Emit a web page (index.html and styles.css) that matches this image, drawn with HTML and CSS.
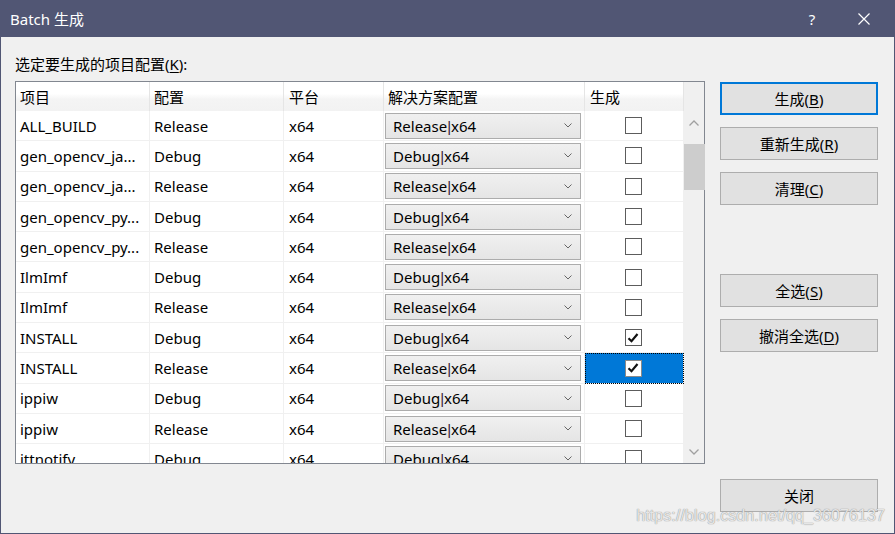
FILE: index.html
```html
<!DOCTYPE html>
<html lang="zh-CN">
<head>
<meta charset="utf-8">
<title>Batch 生成</title>
<link rel="stylesheet" href="styles.css">
</head>
<body>
<div class="window">
  <div class="titlebar">
    <span class="title">Batch 生成</span>
    <span class="tb-help">?</span>
    <span class="tb-close"><svg width="12" height="12" viewBox="0 0 12 12"><path d="M0.5 0.5L11.5 11.5M11.5 0.5L0.5 11.5" stroke="#fff" stroke-width="1.2" fill="none"/></svg></span>
  </div>
  <div class="content">
    <div class="left">
      <div class="label">选定要生成的项目配置(<u>K</u>):</div>
      <div class="table">
        <div class="cells">
          <div class="grid">
            <div class="hcell">项目</div><div class="hcell">配置</div><div class="hcell">平台</div><div class="hcell">解决方案配置</div><div class="hcell">生成</div>

            <div class="cell">ALL_BUILD</div><div class="cell">Release</div><div class="cell">x64</div><div class="cell dd-cell"><div class="dd"><span>Release<i class="pipe">|</i>x64</span><svg class="chev" width="8" height="5" viewBox="0 0 8 5"><path d="M0.5 0.5L4 4L7.5 0.5" stroke="#666" fill="none"/></svg></div></div><div class="cell cb-cell"><span class="cb"></span></div>

            <div class="cell">gen_opencv_ja...</div><div class="cell">Debug</div><div class="cell">x64</div><div class="cell dd-cell"><div class="dd"><span>Debug<i class="pipe">|</i>x64</span><svg class="chev" width="8" height="5" viewBox="0 0 8 5"><path d="M0.5 0.5L4 4L7.5 0.5" stroke="#666" fill="none"/></svg></div></div><div class="cell cb-cell"><span class="cb"></span></div>

            <div class="cell">gen_opencv_ja...</div><div class="cell">Release</div><div class="cell">x64</div><div class="cell dd-cell"><div class="dd"><span>Release<i class="pipe">|</i>x64</span><svg class="chev" width="8" height="5" viewBox="0 0 8 5"><path d="M0.5 0.5L4 4L7.5 0.5" stroke="#666" fill="none"/></svg></div></div><div class="cell cb-cell"><span class="cb"></span></div>

            <div class="cell">gen_opencv_py...</div><div class="cell">Debug</div><div class="cell">x64</div><div class="cell dd-cell"><div class="dd"><span>Debug<i class="pipe">|</i>x64</span><svg class="chev" width="8" height="5" viewBox="0 0 8 5"><path d="M0.5 0.5L4 4L7.5 0.5" stroke="#666" fill="none"/></svg></div></div><div class="cell cb-cell"><span class="cb"></span></div>

            <div class="cell">gen_opencv_py...</div><div class="cell">Release</div><div class="cell">x64</div><div class="cell dd-cell"><div class="dd"><span>Release<i class="pipe">|</i>x64</span><svg class="chev" width="8" height="5" viewBox="0 0 8 5"><path d="M0.5 0.5L4 4L7.5 0.5" stroke="#666" fill="none"/></svg></div></div><div class="cell cb-cell"><span class="cb"></span></div>

            <div class="cell">IlmImf</div><div class="cell">Debug</div><div class="cell">x64</div><div class="cell dd-cell"><div class="dd"><span>Debug<i class="pipe">|</i>x64</span><svg class="chev" width="8" height="5" viewBox="0 0 8 5"><path d="M0.5 0.5L4 4L7.5 0.5" stroke="#666" fill="none"/></svg></div></div><div class="cell cb-cell"><span class="cb"></span></div>

            <div class="cell">IlmImf</div><div class="cell">Release</div><div class="cell">x64</div><div class="cell dd-cell"><div class="dd"><span>Release<i class="pipe">|</i>x64</span><svg class="chev" width="8" height="5" viewBox="0 0 8 5"><path d="M0.5 0.5L4 4L7.5 0.5" stroke="#666" fill="none"/></svg></div></div><div class="cell cb-cell"><span class="cb"></span></div>

            <div class="cell">INSTALL</div><div class="cell">Debug</div><div class="cell">x64</div><div class="cell dd-cell"><div class="dd"><span>Debug<i class="pipe">|</i>x64</span><svg class="chev" width="8" height="5" viewBox="0 0 8 5"><path d="M0.5 0.5L4 4L7.5 0.5" stroke="#666" fill="none"/></svg></div></div><div class="cell cb-cell"><span class="cb"><svg width="14" height="14" viewBox="0 0 14 14"><path d="M2.5 7.2L5.5 10.2L11.5 3" stroke="#111" stroke-width="2.2" fill="none"/></svg></span></div>

            <div class="cell">INSTALL</div><div class="cell">Release</div><div class="cell">x64</div><div class="cell dd-cell"><div class="dd"><span>Release<i class="pipe">|</i>x64</span><svg class="chev" width="8" height="5" viewBox="0 0 8 5"><path d="M0.5 0.5L4 4L7.5 0.5" stroke="#666" fill="none"/></svg></div></div><div class="cell cb-cell selected"><span class="cb cb-sel"><svg width="14" height="14" viewBox="0 0 14 14"><path d="M2.5 7.2L5.5 10.2L11.5 3" stroke="#111" stroke-width="2.2" fill="none"/></svg></span></div>

            <div class="cell">ippiw</div><div class="cell">Debug</div><div class="cell">x64</div><div class="cell dd-cell"><div class="dd"><span>Debug<i class="pipe">|</i>x64</span><svg class="chev" width="8" height="5" viewBox="0 0 8 5"><path d="M0.5 0.5L4 4L7.5 0.5" stroke="#666" fill="none"/></svg></div></div><div class="cell cb-cell"><span class="cb"></span></div>

            <div class="cell">ippiw</div><div class="cell">Release</div><div class="cell">x64</div><div class="cell dd-cell"><div class="dd"><span>Release<i class="pipe">|</i>x64</span><svg class="chev" width="8" height="5" viewBox="0 0 8 5"><path d="M0.5 0.5L4 4L7.5 0.5" stroke="#666" fill="none"/></svg></div></div><div class="cell cb-cell"><span class="cb"></span></div>

            <div class="cell">ittnotify</div><div class="cell">Debug</div><div class="cell">x64</div><div class="cell dd-cell"><div class="dd"><span>Debug<i class="pipe">|</i>x64</span><svg class="chev" width="8" height="5" viewBox="0 0 8 5"><path d="M0.5 0.5L4 4L7.5 0.5" stroke="#666" fill="none"/></svg></div></div><div class="cell cb-cell"><span class="cb"></span></div>
          </div>
        </div>
        <div class="scrollbar">
          <div class="sb-btn"><svg width="10" height="6" viewBox="0 0 10 6"><path d="M0.5 5.5L5 1L9.5 5.5" stroke="#a0a0a0" stroke-width="1.3" fill="none"/></svg></div>
          <div class="sb-thumb"></div>
          <div class="sb-track"></div>
          <div class="sb-btn"><svg width="10" height="6" viewBox="0 0 10 6"><path d="M0.5 0.5L5 5L9.5 0.5" stroke="#a0a0a0" stroke-width="1.3" fill="none"/></svg></div>
        </div>
      </div>
    </div>
    <div class="right">
      <button class="btn btn-default">生成(<u>B</u>)</button>
      <button class="btn">重新生成(<u>R</u>)</button>
      <button class="btn">清理(<u>C</u>)</button>
      <button class="btn btn-group2">全选(<u>S</u>)</button>
      <button class="btn">撤消全选(<u>D</u>)</button>
      <button class="btn btn-close">关闭</button>
    </div>
  </div>
  <div class="watermark">https://blog.csdn.net/qq_36076137</div>
</div>
</body>
</html>
```

FILE: styles.css
```css
* { box-sizing: border-box; }
html, body { margin: 0; padding: 0; }
body {
  width: 895px;
  height: 534px;
  overflow: hidden;
  font-family: "Noto Sans", "Noto Sans CJK SC", sans-serif;
  font-size: 15px;
  color: #000;
  background: #f0f0f0;
}
.window {
  position: relative;
  width: 895px;
  height: 534px;
  border: 1px solid #515674;
  border-top: 0;
  background: #f0f0f0;
  display: flex;
  flex-direction: column;
}
.titlebar {
  height: 37px;
  background: #515674;
  color: #fff;
  display: flex;
  align-items: center;
  padding-left: 9px;
  flex: none;
}
.title {
  font-size: 15px;
  line-height: 20px;
  flex: 1;
}
.tb-help {
  width: 20px;
  font-size: 15px;
  text-align: center;
  margin-right: 36px;
  font-family: "Noto Sans", sans-serif;
}
.tb-close {
  width: 12px;
  height: 12px;
  display: flex;
  margin-right: 24px;
}
.content {
  flex: 1;
  display: flex;
  padding-left: 14px;
}
.left {
  display: flex;
  flex-direction: column;
}
.label {
  margin-top: 17px;
  height: 20px;
  line-height: 20px;
  font-size: 15px;
}
.label u, .btn u { text-decoration-thickness: 1px; text-underline-offset: 2px; }
.table {
  margin-top: 7px;
  width: 690px;
  height: 383px;
  border: 1px solid #828790;
  display: flex;
  background: #fff;
}
.cells {
  width: 668px;
  height: 381px;
  overflow: hidden;
}
.grid {
  display: grid;
  grid-template-columns: 134px 134px 100px 201px 99px;
  grid-template-rows: 29px;
  grid-auto-rows: 30.3px;
}
.hcell {
  background: linear-gradient(#ffffff, #ffffff 40%, #f4f4f4 60%, #f2f2f2);
  border-right: 1px solid #e5e5e5;
  display: flex;
  align-items: center;
  padding-left: 4px;
  line-height: 20px;
}
.hcell:nth-child(3) { padding-left: 5px; }
.hcell:nth-child(5) { padding-left: 5px; }
.cell {
  border-right: 1px solid #f0f0f0;
  border-bottom: 1px solid #f0f0f0;
  display: flex;
  align-items: center;
  padding-left: 4px;
  white-space: nowrap;
  overflow: hidden;
  line-height: 20px;
}
.grid > .cell:nth-child(5n+3) { padding-left: 5px; }
.dd-cell { padding-left: 1px; }
.dd {
  width: 196px;
  height: 26px;
  border: 1px solid #acacac;
  background: linear-gradient(#f0f0f0, #e5e5e5);
  display: flex;
  align-items: center;
  padding-left: 7px;
  padding-right: 8px;
}
.dd span {
  flex: 1;
  display: block;
  height: 20px;
  line-height: 20px;
}
.pipe {
  font-style: normal;
  font-family: "Liberation Sans", sans-serif;
  line-height: 1;
  color: #3a1a3a;
}
.chev { display: block; }
.cb-cell {
  justify-content: center;
  padding-left: 0;
  padding-right: 2px;
}
.cb {
  width: 17px;
  height: 17px;
  border: 1px solid #5c5c5c;
  background: #fff;
  display: flex;
  align-items: center;
  justify-content: center;
}
.cb-sel { border-color: #8a8a8a; }
.selected {
  background: #0078d7;
  outline: 1px dotted #000;
  outline-offset: -1px;
}
.scrollbar {
  width: 20px;
  background: #f0f0f0;
  display: flex;
  flex-direction: column;
}
.sb-btn {
  height: 20px;
  display: flex;
  align-items: center;
  justify-content: center;
  flex: none;
}
.sb-btn:first-child { margin-top: 32px; height: 18px; }
.sb-thumb {
  height: 46px;
  margin-top: 12px;
  background: #cdcdcd;
  margin-right: -1px;
  flex: none;
}
.sb-track { flex: 1; }
.sb-btn:last-child { margin-bottom: 1px; }
.right {
  margin-left: 15px;
  padding-top: 45px;
  padding-bottom: 21px;
  display: flex;
  flex-direction: column;
  width: 158px;
}
.btn {
  width: 158px;
  height: 33px;
  flex: none;
  border: 1px solid #adadad;
  background: #e1e1e1;
  font-family: "Noto Sans", "Noto Sans CJK SC", sans-serif;
  font-size: 15px;
  color: #000;
  padding: 0;
  margin: 0 0 12px 0;
  line-height: 20px;
}
.btn-default { border: 2px solid #0078d7; }
.btn-group2 { margin-top: 57px; }
.btn-close { margin-top: auto; margin-bottom: 0; }
.watermark {
  position: absolute;
  right: 9px;
  bottom: 8px;
  font-family: "Liberation Sans", sans-serif;
  font-size: 16px;
  color: rgba(255, 255, 255, 0.75);
  text-shadow: 0 0 1px #9a9a9a, 0 0 1px #9a9a9a;
  letter-spacing: 0.1px;
}
```
